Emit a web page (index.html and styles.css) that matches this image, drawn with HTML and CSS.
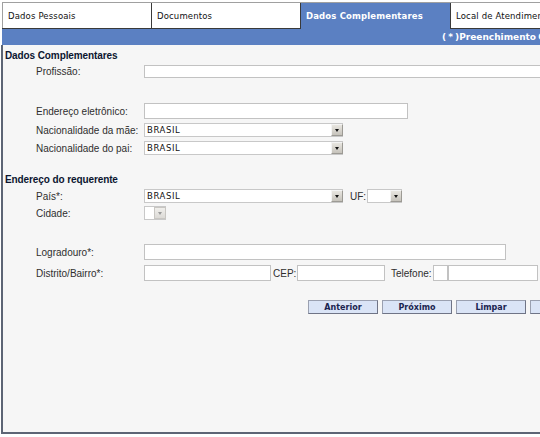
FILE: index.html
```html
<!DOCTYPE html>
<html lang="pt">
<head>
<meta charset="utf-8">
<title>Dados Complementares</title>
<link rel="stylesheet" href="styles.css">
</head>
<body>
<div class="page">
  <div class="tabs">
    <div class="tab tab-first">Dados Pessoais</div>
    <div class="tab tab-second">Documentos</div>
    <div class="tab tab-active">Dados Complementares</div>
    <div class="tab tab-last">Local de Atendimento</div>
  </div>
  <div class="bar">( * )Preenchimento Obrigatório</div>
  <div class="content">
    <div class="row r-title1"><span class="section">Dados Complementares</span></div>
    <div class="row r-prof">
      <span class="label">Profissão:</span>
      <div class="input w-prof"></div>
    </div>
    <div class="row r-email">
      <span class="label">Endereço eletrônico:</span>
      <div class="input w-email"></div>
    </div>
    <div class="row r-mae">
      <span class="label">Nacionalidade da mãe:</span>
      <div class="select w-nac"><span class="val">BRASIL</span><span class="arrow"></span></div>
    </div>
    <div class="row r-pai">
      <span class="label">Nacionalidade do pai:</span>
      <div class="select w-nac"><span class="val">BRASIL</span><span class="arrow"></span></div>
    </div>
    <div class="row r-title2"><span class="section">Endereço do requerente</span></div>
    <div class="row r-pais">
      <span class="label">País*:</span>
      <div class="select w-nac"><span class="val">BRASIL</span><span class="arrow"></span></div>
      <span class="inline-label uf-label">UF:</span>
      <div class="select w-uf"><span class="val"></span><span class="arrow"></span></div>
    </div>
    <div class="row r-cidade">
      <span class="label">Cidade:</span>
      <div class="select w-cidade"><span class="val"></span><span class="arrow disabled"></span></div>
    </div>
    <div class="row r-logr">
      <span class="label">Logradouro*:</span>
      <div class="input w-logr"></div>
    </div>
    <div class="row r-distr">
      <span class="label">Distrito/Bairro*:</span>
      <div class="input w-distr"></div>
      <span class="inline-label cep-label">CEP:</span>
      <div class="input w-cep"></div>
      <span class="inline-label tel-label">Telefone:</span>
      <div class="input w-ddd"></div>
      <div class="input w-tel"></div>
    </div>
    <div class="row r-buttons">
      <div class="btn">Anterior</div>
      <div class="btn">Próximo</div>
      <div class="btn">Limpar</div>
      <div class="btn">Salvar</div>
    </div>
  </div>
</div>
</body>
</html>
```
FILE: styles.css
```css
html, body {
  margin: 0;
  padding: 0;
  background: #ffffff;
  overflow: hidden;
}

.page {
  width: 620px;
  margin: 2px 0 0 1px;
  font-family: "Liberation Sans", Arial, sans-serif;
}

.tabs {
  display: flex;
  height: 25px;
  border-top: 1px solid #a0a0a0;
  border-bottom: 1px solid #3a3a3a;
  margin-left: 1px;
}

.tab {
  box-sizing: border-box;
  height: 25px;
  display: flex;
  align-items: center;
  font-family: "DejaVu Sans", Verdana, sans-serif;
  font-size: 8.5px;
  letter-spacing: 0.15px;
  color: #111;
  background: #ffffff;
  padding-left: 5px;
}

.tab-first {
  width: 150px;
  border-left: 1px solid #a0a0a0;
  border-right: 1px solid #3a3a3a;
}

.tab-second {
  width: 148px;
}

.tab-active {
  width: 150px;
  background: #5b80c2;
  color: #ffffff;
  font-weight: bold;
  border-left: 1px solid #3a3a3a;
  margin-bottom: -1px;
  height: 26px;
}

.tab-last {
  width: 170px;
  border-left: 1px solid #3a3a3a;
}

.bar {
  height: 16px;
  background: #5b80c2;
  color: #ffffff;
  font-family: "DejaVu Sans", Verdana, sans-serif;
  font-weight: bold;
  font-size: 9px;
  word-spacing: -1px;
  line-height: 17px;
  padding-left: 440px;
  white-space: nowrap;
  margin-left: 1px;
}

.content {
  box-sizing: border-box;
  height: 389px;
  background: #f6f6f6;
  border-left: 2px solid #5d6575;
  border-bottom: 2px solid #5d6575;
  padding-left: 1px;
  display: flex;
  flex-direction: column;
}

.row {
  display: flex;
  align-items: center;
  flex: none;
}

.section {
  font-size: 10px;
  font-weight: bold;
  color: #0c1530;
  letter-spacing: -0.1px;
}

.label {
  width: 108px;
  margin-left: 32px;
  font-size: 10px;
  color: #2e2e2e;
  white-space: nowrap;
}

.inline-label {
  font-size: 10px;
  color: #2e2e2e;
  white-space: nowrap;
}

.input {
  box-sizing: border-box;
  height: 100%;
  background: #ffffff;
  border: 1px solid #c2c2c2;
}

.select {
  box-sizing: border-box;
  height: 100%;
  background: #ffffff;
  border: 1px solid #c8c8c8;
  display: flex;
  align-items: center;
  justify-content: space-between;
}

.val {
  font-family: "DejaVu Sans", Verdana, sans-serif;
  font-size: 8.5px;
  letter-spacing: 0.6px;
  color: #111;
  padding-left: 2px;
}

.arrow {
  box-sizing: border-box;
  width: 12px;
  height: 12px;
  margin-right: -1px;
  background: linear-gradient(#e8e6e0, #c6c3bb);
  border: 1px solid #9c9a94;
  border-top-color: #f4f4f4;
  border-left-color: #f4f4f4;
  position: relative;
}

.arrow::after {
  content: "";
  position: absolute;
  left: 3px;
  top: 4px;
  border-left: 2.5px solid transparent;
  border-right: 2.5px solid transparent;
  border-top: 3px solid #111;
}

.arrow.disabled {
  background: linear-gradient(#f0efec, #dcdad6);
  border-color: #c8c6c2;
}

.arrow.disabled::after {
  border-top-color: #9a9a9a;
}

/* rows */
.r-title1 { margin-top: 3px; height: 14px; padding-left: 1px; }
.r-prof { margin-top: 3px; height: 13px; }
.r-email { margin-top: 25px; height: 16px; }
.r-mae { margin-top: 4px; height: 14px; }
.r-pai { margin-top: 4px; height: 14px; }
.r-title2 { margin-top: 17px; height: 14px; padding-left: 1px; }
.r-pais { margin-top: 3px; height: 14px; }
.r-cidade { margin-top: 3px; height: 14px; }
.r-logr { margin-top: 24px; height: 16px; }
.r-distr { margin-top: 5px; height: 16px; }
.r-buttons { margin-top: 19px; height: 14px; padding-left: 304px; gap: 4px; }

.w-prof { width: 420px; }
.w-email { width: 264px; }
.w-nac { width: 199px; }
.w-uf { width: 35px; }
.w-cidade { width: 22px; }
.w-logr { width: 362px; }
.w-distr { width: 127px; }
.w-cep { width: 88px; }
.w-ddd { width: 15px; }
.w-tel { width: 90px; }

.uf-label { margin-left: 7px; width: 17px; }
.cep-label { margin-left: 2px; width: 24px; }
.tel-label { margin-left: 6px; width: 42px; }

.btn {
  box-sizing: border-box;
  width: 70px;
  height: 14px;
  background: #dae4f6;
  border: 1px solid #6f7486;
  border-top-color: #9aa0b0;
  border-left-color: #9aa0b0;
  font-family: "DejaVu Sans", Verdana, sans-serif;
  font-weight: bold;
  font-size: 8px;
  color: #1b2550;
  display: flex;
  align-items: center;
  justify-content: center;
}
```
